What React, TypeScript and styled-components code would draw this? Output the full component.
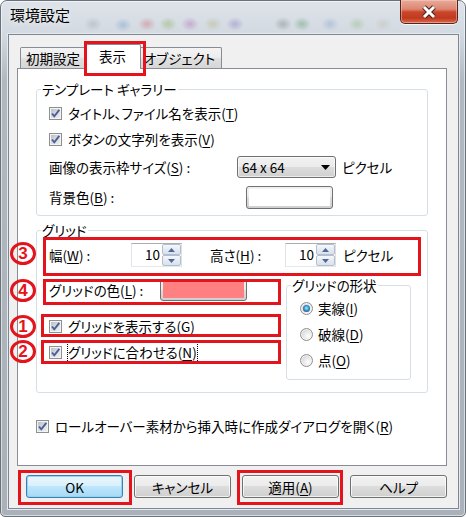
import styled, { createGlobalStyle } from "styled-components";

const RED = "#e3141c";

const GlobalStyle = createGlobalStyle`
  html, body {
    margin: 0;
    padding: 0;
    background: #ffffff;
  }
  body {
    font-family: "Noto Sans CJK JP", "Noto Sans", sans-serif;
    font-size: 13.5px;
    font-feature-settings: "palt";
    color: #000000;
  }
  *, *::before, *::after {
    box-sizing: border-box;
  }
`;

const Window = styled.div`
  width: 466px;
  height: 517px;
  display: flex;
  flex-direction: column;
  padding: 0 6px 7px 7px;
  border: 1px solid #69727b;
  border-radius: 7px 7px 5px 5px;
  background: linear-gradient(180deg, #dde3e9 0px, #d3d9e0 34px, #b1b8c0 80px, #aab1b9 100%);
  box-shadow: inset 0 0 0 1px rgba(255, 255, 255, 0.55);
`;

const TitleBar = styled.div`
  height: 33px;
  flex: none;
  display: flex;
  align-items: flex-start;
  justify-content: space-between;
  background:
    radial-gradient(ellipse 9px 7px at 85px 23px, rgba(150, 150, 170, 0.35), transparent),
    radial-gradient(ellipse 9px 7px at 115px 24px, rgba(90, 140, 200, 0.35), transparent),
    radial-gradient(ellipse 9px 7px at 139px 23px, rgba(200, 80, 90, 0.35), transparent),
    radial-gradient(ellipse 9px 7px at 160px 23px, rgba(120, 160, 60, 0.35), transparent),
    radial-gradient(ellipse 9px 7px at 182px 23px, rgba(170, 80, 180, 0.35), transparent),
    radial-gradient(ellipse 9px 7px at 205px 23px, rgba(170, 170, 110, 0.35), transparent),
    radial-gradient(ellipse 9px 7px at 227px 23px, rgba(110, 100, 190, 0.35), transparent),
    radial-gradient(ellipse 9px 7px at 275px 23px, rgba(90, 110, 110, 0.35), transparent),
    radial-gradient(ellipse 9px 7px at 294px 23px, rgba(60, 140, 80, 0.35), transparent),
    radial-gradient(ellipse 9px 7px at 322px 23px, rgba(100, 140, 200, 0.3), transparent),
    radial-gradient(ellipse 9px 7px at 349px 23px, rgba(120, 170, 90, 0.3), transparent),
    radial-gradient(ellipse 9px 7px at 375px 23px, rgba(170, 170, 140, 0.25), transparent);
`;

const Title = styled.div`
  margin-top: 4px;
  padding-left: 2px;
  font-size: 15px;
  line-height: 20px;
  text-shadow: 0 0 6px rgba(255, 255, 255, 0.9);
`;

const CloseButton = styled.div`
  width: 58px;
  height: 24px;
  margin-top: -1px;
  margin-right: 1px;
  display: flex;
  align-items: center;
  justify-content: center;
  border: 1px solid #57231a;
  border-top: none;
  border-radius: 0 0 5px 5px;
  background: linear-gradient(180deg, #e8ab9c 0%, #dd8670 40%, #c9472b 52%, #c0391d 78%, #d9694f 100%);
  box-shadow: inset 0 0 0 1px rgba(255, 215, 205, 0.45), 0 1px 0 rgba(255, 255, 255, 0.7);
`;

const Client = styled.div`
  flex: 1;
  display: flex;
  flex-direction: column;
  background: #f0f0f0;
  border: 1px solid #7b8794;
  box-shadow: 0 0 0 1px #e6eaee;
`;

const TabStrip = styled.div`
  height: 33px;
  flex: none;
  display: flex;
  align-items: flex-end;
  padding-left: 11px;
`;

const Tab = styled.div<{ $w?: number; $active?: boolean }>`
  position: relative;
  z-index: ${(p) => (p.$active ? 2 : 0)};
  width: ${(p) => (p.$w ? `${p.$w}px` : "auto")};
  height: ${(p) => (p.$active ? 25 : 21)}px;
  margin: 0 ${(p) => (p.$active ? -2 : 0)}px ${(p) => (p.$active ? -1 : 0)}px;
  padding: 0 6px ${(p) => (p.$active ? 3 : 1)}px 4px;
  display: flex;
  align-items: center;
  justify-content: center;
  white-space: nowrap;
  border: 1px solid #898c95;
  border-bottom: none;
  border-radius: 2px 2px 0 0;
  background: ${(p) =>
    p.$active
      ? "#ffffff"
      : "linear-gradient(180deg, #f4f4f4 0%, #ececec 50%, #e0e0e0 51%, #d6d6d6 100%)"};
`;

const Panel = styled.div`
  margin-left: 8px;
  width: 430px;
  height: 398px;
  flex: none;
  border: 1px solid #898c95;
  background: #ffffff;
  padding: 13px 18px 0 18px;
`;

const Group = styled.fieldset<{ $mt?: number; $pt: number; $pb: number }>`
  margin: ${(p) => p.$mt ?? 0}px 0 0;
  padding: ${(p) => p.$pt}px 12px ${(p) => p.$pb}px;
  border: 1px solid #d5dfe5;
  border-radius: 3px;
  min-width: 0;
`;

const Caption = styled.legend`
  margin-left: -8px;
  padding: 0 1px;
  line-height: 14px;
`;

const Row = styled.div<{ $h: number; $mt?: number }>`
  position: relative;
  display: flex;
  align-items: center;
  height: ${(p) => p.$h}px;
  margin-top: ${(p) => p.$mt ?? 0}px;
  white-space: nowrap;
`;

const Label = styled.span<{ $w?: number; $ml?: number }>`
  flex: none;
  width: ${(p) => (p.$w ? `${p.$w}px` : "auto")};
  margin-left: ${(p) => p.$ml ?? 0}px;
`;

const FocusLabel = styled.span`
  outline: 1px dotted #000000;
  outline-offset: 0px;
`;

const Key = styled.span`
  text-decoration: underline;
  text-underline-offset: 2px;
`;

const CheckBox = styled.span`
  flex: none;
  width: 13px;
  height: 13px;
  margin-right: 6px;
  display: flex;
  align-items: center;
  justify-content: center;
  border: 1px solid #8e8f8f;
  background: linear-gradient(135deg, #b4b9c0 0%, #dcdee1 55%, #f2f2f2 100%);
  box-shadow: inset 0 0 0 1px #f4f4f4;
`;

const Radio = styled.span<{ $on?: boolean }>`
  flex: none;
  width: 13px;
  height: 13px;
  margin: 0 5px 0 1px;
  border-radius: 50%;
  display: flex;
  align-items: center;
  justify-content: center;
  border: 1px solid #8e8f8f;
  background: radial-gradient(circle at 65% 65%, #ffffff 0%, #e6e6e6 45%, #c2c2c2 100%);
  box-shadow: inset 0 0 0 1px #f4f4f4;
  &::after {
    content: "";
    display: ${(p) => (p.$on ? "block" : "none")};
    width: 7px;
    height: 7px;
    border-radius: 50%;
    background: radial-gradient(circle at 50% 45%, #b6ecff 0%, #4aa8de 35%, #1d5a8e 75%, #153f66 100%);
  }
`;

const Combo = styled.div`
  flex: none;
  width: 99px;
  height: 22px;
  display: flex;
  align-items: center;
  justify-content: space-between;
  padding: 0 5px 0 4px;
  border: 1px solid #707070;
  border-radius: 3px;
  background: linear-gradient(180deg, #f2f2f2 0%, #ebebeb 49%, #dddddd 50%, #cfcfcf 100%);
  box-shadow: inset 0 0 0 1px rgba(255, 255, 255, 0.6);
`;

const ColorButton = styled.div<{ $h: number }>`
  flex: none;
  width: 87px;
  height: ${(p) => p.$h}px;
  padding: 2px;
  border: 1px solid #707070;
  border-radius: 3px;
  background: linear-gradient(180deg, #f2f2f2 0%, #ebebeb 49%, #dddddd 50%, #cfcfcf 100%);
`;

const Swatch = styled.div<{ $color: string }>`
  height: 100%;
  background: ${(p) => p.$color};
`;

const Spin = styled.div`
  flex: none;
  width: 51px;
  height: 24px;
  display: flex;
  border: 1px solid #abadb3;
  border-color: #abadb3 #dbdfe6 #e3e9ef #e2e3ea;
  background: #ffffff;
`;

const SpinValue = styled.span`
  flex: 1;
  text-align: right;
  padding-right: 2px;
  line-height: 20px;
`;

const SpinArrows = styled.div`
  width: 19px;
  display: flex;
  flex-direction: column;
`;

const SpinButton = styled.div`
  flex: 1;
  display: flex;
  align-items: center;
  justify-content: center;
  border: 1px solid #b3bfcf;
  border-radius: 2px;
  background: linear-gradient(180deg, #f6f8fb 0%, #e6ebf2 50%, #d9e1eb 100%);
`;

const Columns = styled.div`
  display: grid;
  grid-template-columns: 237px 125px;
  margin-top: 6px;
`;

const Stack = styled.div`
  display: flex;
  flex-direction: column;
`;

const ButtonBar = styled.div`
  display: flex;
  gap: 11px;
  margin-top: 9px;
  padding-left: 17px;
`;

const Button = styled.div<{ $default?: boolean }>`
  position: relative;
  width: 97px;
  height: 23px;
  display: flex;
  align-items: center;
  justify-content: center;
  border: 1px solid ${(p) => (p.$default ? "#3c7fb1" : "#707070")};
  border-radius: 3px;
  background: ${(p) =>
    p.$default
      ? "linear-gradient(180deg, #eaf6fd 0%, #d9f0fc 49%, #bee6fd 50%, #a7d9f5 100%)"
      : "linear-gradient(180deg, #f2f2f2 0%, #ebebeb 49%, #dddddd 50%, #cfcfcf 100%)"};
  box-shadow: inset 0 0 0 1px
    ${(p) => (p.$default ? "rgba(140, 210, 245, 0.9)" : "rgba(255, 255, 255, 0.7)")};
`;

const Mark = styled.span<{ $t: number; $r: number; $b: number; $l: number }>`
  position: absolute;
  top: ${(p) => p.$t}px;
  right: ${(p) => p.$r}px;
  bottom: ${(p) => p.$b}px;
  left: ${(p) => p.$l}px;
  border: 3px solid ${RED};
  pointer-events: none;
  z-index: 3;
`;

const Badge = styled.span<{ $top: number }>`
  position: absolute;
  left: -39px;
  top: ${(p) => p.$top}px;
  width: 26px;
  height: 23px;
  display: flex;
  align-items: center;
  justify-content: center;
  border: 3px solid ${RED};
  border-radius: 50%;
  color: ${RED};
  font-family: "Liberation Sans", Arial, sans-serif;
  font-size: 17px;
  font-weight: 700;
  line-height: 17px;
`;

function Check() {
  return (
    <CheckBox>
      <svg width="11" height="11" viewBox="0 0 11 11">
        <path d="M2 5.5 L4.3 8.3 L9.3 1.8" fill="none" stroke="#4a5f98" strokeWidth="1.9" />
      </svg>
    </CheckBox>
  );
}

function Arrow({ up }: { up?: boolean }) {
  return (
    <svg width="7" height="4" viewBox="0 0 7 4">
      <polygon points={up ? "0,4 3.5,0 7,4" : "0,0 3.5,4 7,0"} fill="#4d6a9e" />
    </svg>
  );
}

function App() {
  return (
    <>
      <GlobalStyle />
      <Window>
        <TitleBar>
          <Title>環境設定</Title>
          <CloseButton>
            <svg width="18" height="14" viewBox="0 0 18 14">
              <path d="M4 2 L14 12 M14 2 L4 12" stroke="#4a2019" strokeWidth="5" />
              <path d="M4 2 L14 12 M14 2 L4 12" stroke="#ffffff" strokeWidth="3" />
            </svg>
          </CloseButton>
        </TitleBar>
        <Client>
          <TabStrip>
            <Tab $w={68}>初期設定</Tab>
            <Tab $w={55} $active>
              表示
              <Mark $t={-4} $r={-6} $b={-7} $l={-3} />
            </Tab>
            <Tab>オブジェクト</Tab>
          </TabStrip>
          <Panel>
            <Group $pt={4} $pb={3}>
              <Caption>テンプレート ギャラリー</Caption>
              <Row $h={26}>
                <Check />
                タイトル、ファイル名を表示(<Key>T</Key>)
              </Row>
              <Row $h={26}>
                <Check />
                ボタンの文字列を表示(<Key>V</Key>)
              </Row>
              <Row $h={30}>
                <Label $w={188}>
                  画像の表示枠サイズ(<Key>S</Key>) :
                </Label>
                <Combo>
                  <span>64 x 64</span>
                  <svg width="9" height="5" viewBox="0 0 9 5">
                    <polygon points="0,0 9,0 4.5,5" fill="#000000" />
                  </svg>
                </Combo>
                <Label $ml={6}>ピクセル</Label>
              </Row>
              <Row $h={30}>
                <Label $w={197}>
                  背景色(<Key>B</Key>) :
                </Label>
                <ColorButton $h={23}>
                  <Swatch $color="#ffffff" />
                </ColorButton>
              </Row>
            </Group>

            <Group $mt={7} $pt={3} $pb={12}>
              <Caption>グリッド</Caption>
              <Row $h={30}>
                <Mark $t={-3} $r={-6} $b={-6} $l={-6} />
                <Badge $top={2}>3</Badge>
                <Label $w={82}>
                  幅(<Key>W</Key>) :
                </Label>
                <Spin>
                  <SpinValue>10</SpinValue>
                  <SpinArrows>
                    <SpinButton>
                      <Arrow up />
                    </SpinButton>
                    <SpinButton>
                      <Arrow />
                    </SpinButton>
                  </SpinArrows>
                </Spin>
                <Label $w={75} $ml={28}>
                  高さ(<Key>H</Key>) :
                </Label>
                <Spin>
                  <SpinValue>10</SpinValue>
                  <SpinArrows>
                    <SpinButton>
                      <Arrow up />
                    </SpinButton>
                    <SpinButton>
                      <Arrow />
                    </SpinButton>
                  </SpinArrows>
                </Spin>
                <Label $ml={7}>ピクセル</Label>
              </Row>
              <Columns>
                <Stack>
                  <Row $h={28}>
                    <Mark $t={3} $r={5} $b={-1} $l={-6} />
                    <Badge $top={3}>4</Badge>
                    <Label $w={111}>
                      グリッドの色(<Key>L</Key>) :
                    </Label>
                    <ColorButton $h={22}>
                      <Swatch $color="#ff8080" />
                    </ColorButton>
                  </Row>
                  <Row $h={26} $mt={9}>
                    <Mark $t={1} $r={5} $b={2} $l={-8} />
                    <Badge $top={2}>1</Badge>
                    <Check />
                    グリッドを表示する(<Key>G</Key>)
                  </Row>
                  <Row $h={26}>
                    <Mark $t={1} $r={5} $b={1} $l={-8} />
                    <Badge $top={1}>2</Badge>
                    <Check />
                    <FocusLabel>
                      グリッドに合わせる(<Key>N</Key>)
                    </FocusLabel>
                  </Row>
                </Stack>
                <Group $mt={2} $pt={3} $pb={6}>
                  <Caption>グリッドの形状</Caption>
                  <Row $h={26}>
                    <Radio $on />
                    実線(<Key>I</Key>)
                  </Row>
                  <Row $h={26}>
                    <Radio />
                    破線(<Key>D</Key>)
                  </Row>
                  <Row $h={26}>
                    <Radio />
                    点(<Key>O</Key>)
                  </Row>
                </Group>
              </Columns>
            </Group>

            <Row $h={28} $mt={19}>
              <Check />
              ロールオーバー素材から挿入時に作成ダイアログを開く(<Key>R</Key>)
            </Row>
          </Panel>
          <ButtonBar>
            <Button $default>
              OK
              <Mark $t={-6} $r={-10} $b={-8} $l={-9} />
            </Button>
            <Button>キャンセル</Button>
            <Button>
              適用(<Key>A</Key>)
              <Mark $t={-6} $r={-5} $b={-8} $l={-6} />
            </Button>
            <Button>ヘルプ</Button>
          </ButtonBar>
        </Client>
      </Window>
    </>
  );
}

export default App;
